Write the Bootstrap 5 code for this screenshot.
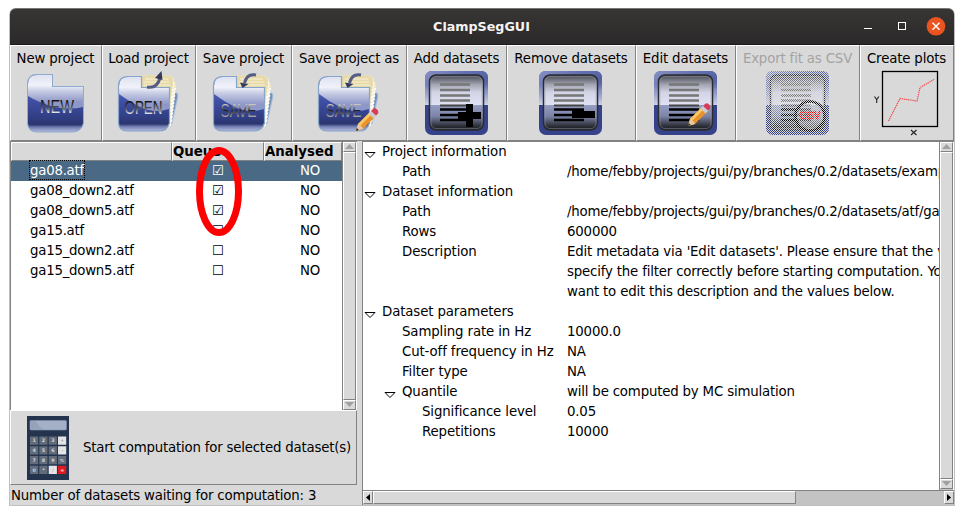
<!DOCTYPE html>
<html lang="en">
<head>
<meta charset="utf-8">
<title>ClampSegGUI</title>
<link rel="stylesheet" href="https://cdn.jsdelivr.net/npm/bootstrap@5.3.0/dist/css/bootstrap.min.css">
<style>
body{font:13.33px/20px "DejaVu Sans",sans-serif;letter-spacing:-.18px;color:#000;background:#fff;overflow:hidden}
.win{width:946px;height:498px;margin:8px 0 0 9px;border:1px solid #bfbfbf;border-top:0;border-radius:7px 7px 0 0;background:#d9d9d9}
.titlebar{height:37px;background:linear-gradient(#373634,#2b2929);border-top:1px solid #777;border-bottom:1px solid #1c1b1b;border-radius:6px 6px 0 0;color:#f4f3f2;font-weight:700;font-size:12.7px;letter-spacing:0}
.titlebar .tt{padding-left:91px}
.wbtns{width:92px;height:20px}
.tools{display:grid;grid-template-columns:92px 94px 96px 115px 100px 129px 100px 124px 94px;height:96px}
.tbtn,.raised{background:#d9d9d9;border:1px solid;border-color:#fff #828282 #828282 #fff;border-radius:0;padding:0;color:#000;letter-spacing:inherit}
.tbtn{padding:3px 1px 0 0;font-size:13.33px;letter-spacing:-.16px;line-height:20px;white-space:nowrap;overflow:hidden}
.tbtn.off{color:#a3a3a3}
.tbtn svg{width:66px;height:66px;flex:none;margin-top:1px}
.panes{height:364px}
.lpane{width:347px}
.tree{height:269px;background:#fff;border-left:1px solid #828282;border-top:1px solid #828282}
.cols{display:grid;grid-template-columns:161px 92px 78px}
.thead div{height:19px;line-height:18px;background:#d9d9d9;border:1px solid;border-color:#fff #828282 #828282 #fff;font-weight:700;letter-spacing:0;overflow:hidden}
.trow{height:20px}
.trow .fname{padding-left:19px;letter-spacing:-.24px}
.trow .ana{padding-left:14px;text-align:center}
.trow .chk{text-align:center;letter-spacing:0}
.trow.sel{background:#4a6984;color:#fff}
.trow.sel .fname span{outline:1px dotted #000;display:inline-block;height:18px;line-height:20px}
.vbar{width:14px;background:#c3c3c3;border-left:1px solid #828282}
.arr{width:13px;height:10px;line-height:0}
.arr svg{display:block;margin:1px auto}
.start{height:75px;width:347px;font-size:inherit;letter-spacing:-.2px;white-space:nowrap}
.start svg{margin:0 14px 0 16px}
.status{height:20px;line-height:22px;padding-left:1px;white-space:nowrap}
.rpane{margin-left:5px;width:592px;background:#fff;border-left:1px solid #828282;border-top:1px solid #828282}
.rview{height:348px}
.rview .vbar{padding-bottom:1px}
.info{width:576px;overflow:hidden}
.irow{height:20px;display:grid;grid-template-columns:204px 1fr;white-space:nowrap;line-height:20px}
.irow .k,.irow .k1,.irow .k2{letter-spacing:-.12px}
.irow .k{padding-left:19px}
.irow .k1{padding-left:39px}
.irow .k2{padding-left:59px}
.irow .pth{letter-spacing:-.23px}
.tri{width:12px;height:7px;margin:0 6px -3px -18px;vertical-align:baseline}
.hbar{height:15px;background:#c3c3c3;border-top:1px solid #828282}
.hthumb{width:423px;height:13px}
.harr{width:10px;height:13px}
.ring{left:196px;top:147px;width:46px;height:90px;pointer-events:none}
</style>
<script src="https://cdn.jsdelivr.net/npm/bootstrap@5.3.0/dist/js/bootstrap.bundle.min.js"></script>
</head>
<body>
<svg width="0" height="0" class="position-absolute" aria-hidden="true">
<defs>
<linearGradient id="gf" x2="0" y2="1"><stop offset="0" stop-color="#dfe2f0"/><stop offset=".3" stop-color="#f1f2fa"/><stop offset=".5" stop-color="#c3c8e2"/><stop offset=".8" stop-color="#8e98c8"/></linearGradient>
<linearGradient id="gd" x2="0" y2="1"><stop offset="0" stop-color="#6f7fc4"/><stop offset=".45" stop-color="#3f4fa4"/><stop offset=".7" stop-color="#33418a"/><stop offset=".87" stop-color="#2b3670"/><stop offset=".92" stop-color="#7480b4"/><stop offset="1" stop-color="#b5bbdc"/></linearGradient>
<linearGradient id="gt" x2="0" y2="1"><stop offset="0.2" stop-color="#111"/><stop offset=".55" stop-color="#555"/><stop offset=".8" stop-color="#e8e8e8"/></linearGradient>
<linearGradient id="gt2" x2="0" y2="1"><stop offset="0.2" stop-color="#ccc"/><stop offset=".5" stop-color="#222"/><stop offset=".8" stop-color="#aaa"/></linearGradient>
<linearGradient id="ge" x2="1" y2="1"><stop offset="0" stop-color="#8791c4"/><stop offset=".35" stop-color="#6370b0"/><stop offset=".6" stop-color="#5462a4"/></linearGradient>
<linearGradient id="gs" x2="0" y2="1"><stop offset="0" stop-color="#6a76b2" stop-opacity="0"/><stop offset=".4" stop-color="#a5add4" stop-opacity=".6"/><stop offset="1" stop-color="#d0d4ea"/></linearGradient>
<linearGradient id="gi" x2="0" y2="1"><stop offset="0" stop-color="#444650"/><stop offset=".18" stop-color="#a5a7b4"/><stop offset=".32" stop-color="#d3d4e6"/><stop offset=".54" stop-color="#e0e1f2"/><stop offset=".545" stop-color="#959ec2"/><stop offset=".75" stop-color="#7b84a6"/><stop offset=".92" stop-color="#30333c"/><stop offset="1" stop-color="#17181c"/></linearGradient>
<pattern id="dots" width="2" height="2" patternUnits="userSpaceOnUse"><path fill="#d9d9d9" d="M0 0h1v1H0zM1 1h1v1H1z"/></pattern>
<symbol id="pencil" viewBox="0 0 24 24"><path d="M1 23l2-7L15 4l5 5L8 21z" fill="#e8922a"/><path d="M3 16L15 4l2 2L4.500 18.500z" fill="#f9c768"/><path d="M1 23l2-7 2 1 2 2 1 2z" fill="#e6c9a0"/><path d="M1 23l.8-3 2 2z" fill="#222"/><path d="M13.500 5.500L17 2l5 5-3.500 3.500z" fill="#c9cdd3"/><path d="M16 3l2-2q2-1.500 4 .500t1 4l-2 2z" fill="#d93a56"/></symbol>
<symbol id="folder" viewBox="0 0 66 66"><path d="M53 21q9 0 9 5l-6 27q-2 7-10 7z" fill="#7792bd" stroke="#a9c0dc"/><path d="M26 5.500h26q5 0 6 5l2 5-5 40q-2 5-10 5H25z" fill="#f2e9c6"/><path d="M57 12l-3 45M59 18l-4 35" stroke="#fff" stroke-width="2" stroke-dasharray="2 1.500"/><path d="M26 5.500h26q5 0 5 8l-2 14H26z" fill="#e6daaa"/><path d="M29 9h23M28 12h25M28 15h26" stroke="#f8f1d2"/><path d="M2.500 16q0-9.500 9-9.500H25.500V17.500H53.500V53q-2 8-11 8H11q-8 0-8.500-8z" fill="url(#gd)"/><path d="M3 16q0-9 9-9H25v11H53V39Q38 44 24 37 12 31 3 24z" fill="url(#gf)"/><path d="M2.500 16q0-9.500 9-9.500H25.500V17.500H53.500V53q-2 8-11 8H11q-8 0-8.500-8z" fill="none" stroke="#86a4cc" stroke-width="1.200"/></symbol>
<symbol id="savef" viewBox="0 0 66 66"><use href="#folder"/><path d="M45 5q-9-2-11.500 8" fill="none" stroke="#545d86" stroke-width="3"/><path d="M29 12.500l8.500 1.500-6 4z" fill="#343b5e"/><text x="9.500" y="47" font-family="Liberation Sans" font-size="19" textLength="36" lengthAdjust="spacingAndGlyphs" letter-spacing="0" fill="url(#gt2)">SAVE</text></symbol>
<symbol id="sheet" viewBox="0 0 66 66"><rect x="1" y="1" width="63" height="64" rx="7" fill="#36428a"/><path d="M1 35V8q0-7 7-7h49q7 0 7 7v27z" fill="url(#ge)"/><path d="M1 10h5v25H1zM59 10h5v25h-5z" fill="url(#gs)"/><rect x="5.500" y="5" width="54" height="55" rx="6.500" fill="url(#gi)" stroke="#2b2c32" stroke-width="1.500"/><rect x="7" y="6.500" width="51" height="52" rx="5" fill="none" stroke="#999dac" stroke-opacity=".45"/><path d="M16 14.500h30M16 20h30M16 25.500h30M16 30.500h30" stroke="#777" stroke-width="2.500"/><path d="M16 35.500h30" stroke="#444" stroke-width="2"/><path d="M16 39.500h30M16 45h30M16 50h30" stroke="#000" stroke-width="2.300"/></symbol>
<symbol id="tri" viewBox="0 0 12 7"><path d="M1 .500h10L6 5.500z" fill="#fff" stroke="#000"/></symbol>
<symbol id="up" viewBox="0 0 9 5"><path d="M0 5h9L4.500 0z" fill="#a0a0a0"/></symbol>
<symbol id="down" viewBox="0 0 9 5"><path d="M0 0h9L4.500 5z" fill="#a0a0a0"/></symbol>
</defs>
</svg>

<div class="win">
<header class="titlebar d-flex align-items-center justify-content-between">
<div class="tt flex-grow-1 text-center">ClampSegGUI</div>
<svg class="wbtns" viewBox="0 0 92 20"><path d="M2 11.500h8" stroke="#fff"/><rect x="36.500" y="5.500" width="7" height="7" fill="none" stroke="#fff"/><circle cx="74" cy="9.300" r="9.300" fill="#e95420"/><path d="M70.500 5.800l7 7m0-7l-7 7" stroke="#fff" stroke-width="1.400"/></svg>
</header>
<nav class="tools">
<button class="tbtn d-flex flex-column align-items-center">New project<svg viewBox="0 0 66 66"><path d="M4.500 14q0-9.500 9-9.500H29.500V16.500H60.500V53q-2 9-11 9H14q-9 0-9.500-9z" fill="url(#gd)"/><path d="M5 14q0-9 9-9H29v12H60V37Q48 40 32 37 16 33 5 26z" fill="url(#gf)"/><path d="M4.500 14q0-9.500 9-9.500H29.500V16.500H60.500V53q-2 9-11 9H14q-9 0-9.500-9z" fill="none" stroke="#8fabd0"/><text x="17" y="43" font-family="Liberation Sans" font-size="19" letter-spacing="0" textLength="34" lengthAdjust="spacingAndGlyphs" fill="url(#gt)">NEW</text></svg></button>
<button class="tbtn d-flex flex-column align-items-center">Load project<svg viewBox="0 0 66 66"><use href="#folder"/><path d="M31 17q10 2 13-9" fill="none" stroke="#545d86" stroke-width="3"/><path d="M39 8l6.500-7 1 9z" fill="#343b5e"/><text x="8.500" y="44" font-family="Liberation Sans" font-size="18.500" letter-spacing="0" textLength="38" lengthAdjust="spacingAndGlyphs" fill="url(#gt)">OPEN</text></svg></button>
<button class="tbtn d-flex flex-column align-items-center">Save project<svg viewBox="0 0 66 66"><use href="#savef"/></svg></button>
<button class="tbtn d-flex flex-column align-items-center">Save project as<svg viewBox="0 0 66 66"><use href="#savef"/><use href="#pencil" x="39" y="38" width="24" height="24"/></svg></button>
<button class="tbtn d-flex flex-column align-items-center">Add datasets<svg viewBox="0 0 66 66"><use href="#sheet"/><path d="M42 34h7v8h8v7h-8v8h-7v-8h-8v-7h8z"/></svg></button>
<button class="tbtn d-flex flex-column align-items-center">Remove datasets<svg viewBox="0 0 66 66"><use href="#sheet"/><path d="M34 39h12v2h11v7H34z"/></svg></button>
<button class="tbtn d-flex flex-column align-items-center">Edit datasets<svg viewBox="0 0 66 66"><use href="#sheet"/><use href="#pencil" x="34" y="33" width="24" height="24"/></svg></button>
<button class="tbtn off d-flex flex-column align-items-center">Export fit as CSV<svg viewBox="0 0 66 66"><use href="#sheet"/><circle cx="45" cy="46" r="14.500" fill="#fff" fill-opacity=".25" stroke="#000" stroke-width="2.600"/><text x="34.500" y="49" font-family="Liberation Sans" font-weight="bold" font-size="10.500" textLength="21" fill="#f00" stroke="#f00" stroke-width=".6">CSV</text><path fill="url(#dots)" d="M0 0h66v66H0z" shape-rendering="crispEdges"/></svg></button>
<button class="tbtn d-flex flex-column align-items-center">Create plots<svg viewBox="0 0 66 66"><rect x="8.500" y="1.500" width="55" height="55" fill="none" stroke="#000" stroke-width="1.300"/><path d="M14.500 51L26 28.500l17 2.500 3-13.500L60 9.500" fill="none" stroke="#f04848" stroke-width="1.200" stroke-dasharray="1.300 .8"/><path d="M.500 26.500l2.200 3 2.200-3M2.700 29.500V33M37 60l5.500 5m0-5L37 65" fill="none" stroke="#222" stroke-width="1.100"/></svg></button>
</nav>
<main class="panes d-flex">
<section class="lpane flex-shrink-0">
<div class="tree d-flex">
<div>
<div class="cols thead"><div></div><div>Queue</div><div>Analysed</div></div>
<div class="cols trow sel"><div class="fname"><span>ga08.atf</span></div><div class="chk">☑</div><div class="ana">NO</div></div>
<div class="cols trow"><div class="fname">ga08_down2.atf</div><div class="chk">☑</div><div class="ana">NO</div></div>
<div class="cols trow"><div class="fname">ga08_down5.atf</div><div class="chk">☑</div><div class="ana">NO</div></div>
<div class="cols trow"><div class="fname">ga15.atf</div><div class="chk">☐</div><div class="ana">NO</div></div>
<div class="cols trow"><div class="fname">ga15_down2.atf</div><div class="chk">☐</div><div class="ana">NO</div></div>
<div class="cols trow"><div class="fname">ga15_down5.atf</div><div class="chk">☐</div><div class="ana">NO</div></div>
</div>
<div class="vbar d-flex flex-column"><div class="raised arr"><svg width="9" height="5"><use href="#up"/></svg></div><div class="raised flex-grow-1"></div><div class="raised arr"><svg width="9" height="5"><use href="#down"/></svg></div></div>
</div>
<button class="raised start d-flex align-items-center"><svg width="42" height="64" viewBox="0 0 42 64"><path fill="#24344f" d="M0 0h42v64H0z"/><rect x="3" y="4.500" width="36.500" height="9.500" rx="1" fill="#a4b0c6" stroke="#8593ab" stroke-width=".6"/><path d="M3.500 5H9q2 6 9 9H3.500z" fill="#95a2b9"/>
<g fill="#626c7b"><path d="M3 20.500h8.200v8.200H3zM12.300 20.500h8.200v8.200h-8.200zM21.700 20.500h8.200v8.200h-8.200zM3 30.300h8.200v8.200H3zM12.300 30.300h8.200v8.200h-8.200zM21.700 30.300h8.200v8.200h-8.200zM3 40h8.200v8.200H3zM12.300 40h8.200v8.200h-8.200zM21.700 40h8.200v8.200h-8.200zM31 40h8.200v8.200H31zM3 49.800h8.200V58H3zM12.300 49.800h8.200V58h-8.200z"/></g>
<path fill="#e4e4e6" d="M31 20.500h8.200v8.200H31zM31 30.300h8.200v8.200H31zM21.700 49.800h8.200V58h-8.200z"/><path fill="#dc1a20" d="M31 49.800h8.200V58H31z"/>
<g font-family="DejaVu Sans" font-weight="bold" font-size="4.800" fill="#d5d8dd" text-anchor="middle"><text x="7" y="26.400">1</text><text x="16.400" y="26.400">2</text><text x="25.800" y="26.400">3</text><text x="7" y="36.200">4</text><text x="16.400" y="36.200">5</text><text x="25.800" y="36.200">6</text><text x="7" y="46">7</text><text x="16.400" y="46">8</text><text x="25.800" y="46">9</text><text x="35.100" y="46" font-size="4.200">%</text><text x="7" y="55.700">0</text><text x="16.400" y="55">•</text><text x="35.100" y="55.600" fill="#fff">=</text><text x="35.100" y="26.400" fill="#aaa">+</text><text x="35.100" y="36" fill="#aaa">-</text><text x="25.800" y="55.700" fill="#aaa">/</text></g></svg><span>Start computation for selected dataset(s)</span></button>
<div class="status">Number of datasets waiting for computation: 3</div>
</section>
<section class="rpane">
<div class="rview d-flex">
<div class="info">
<div class="irow"><div class="k"><svg class="tri"><use href="#tri"/></svg>Project information</div></div>
<div class="irow"><div class="k1">Path</div><div class="pth">/home/febby/projects/gui/py/branches/0.2/datasets/examp</div></div>
<div class="irow"><div class="k"><svg class="tri"><use href="#tri"/></svg>Dataset information</div></div>
<div class="irow"><div class="k1">Path</div><div class="pth">/home/febby/projects/gui/py/branches/0.2/datasets/atf/ga0</div></div>
<div class="irow"><div class="k1">Rows</div><div>600000</div></div>
<div class="irow"><div class="k1">Description</div><div>Edit metadata via 'Edit datasets'. Please ensure that the v</div></div>
<div class="irow"><div></div><div>specify the filter correctly before starting computation. Yo</div></div>
<div class="irow"><div></div><div>want to edit this description and the values below.</div></div>
<div class="irow"><div class="k"><svg class="tri"><use href="#tri"/></svg>Dataset parameters</div></div>
<div class="irow"><div class="k1">Sampling rate in Hz</div><div>10000.0</div></div>
<div class="irow"><div class="k1">Cut-off frequency in Hz</div><div>NA</div></div>
<div class="irow"><div class="k1">Filter type</div><div>NA</div></div>
<div class="irow"><div class="k1"><svg class="tri"><use href="#tri"/></svg>Quantile</div><div>will be computed by MC simulation</div></div>
<div class="irow"><div class="k2">Significance level</div><div>0.05</div></div>
<div class="irow"><div class="k2">Repetitions</div><div>10000</div></div>
</div>
<div class="vbar d-flex flex-column"><div class="raised arr"><svg width="9" height="5"><use href="#up"/></svg></div><div class="raised flex-grow-1"></div><div class="raised arr"><svg width="9" height="5"><use href="#down"/></svg></div></div>
</div>
<div class="hbar d-flex"><div class="raised harr"><svg class="d-block" width="8" height="11"><path d="M6 2v7L2 5.500z"/></svg></div><div class="raised hthumb"></div><div class="raised harr ms-auto"><svg class="d-block" width="8" height="11"><path d="M2 2v7l4-3.500z"/></svg></div></div>
</section>
</main>
</div>
<svg class="ring position-absolute" viewBox="0 0 46 90"><ellipse cx="23" cy="44.500" rx="19.500" ry="41" fill="none" stroke="#f00" stroke-width="7"/></svg>
</body>
</html>
